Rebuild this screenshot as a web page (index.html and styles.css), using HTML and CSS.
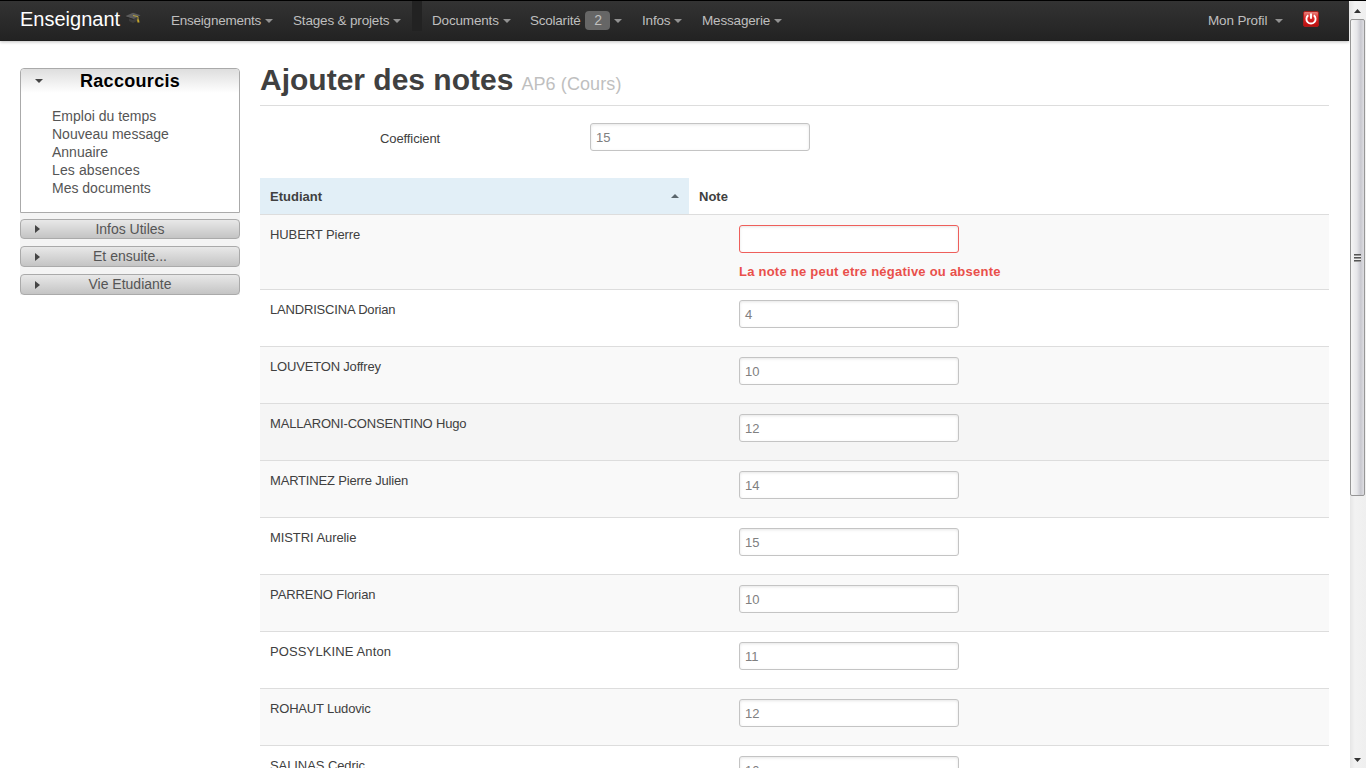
FILE: index.html
```html
<!DOCTYPE html>
<html lang="fr">
<head>
<meta charset="utf-8">
<title>Ajouter des notes</title>
<link rel="stylesheet" href="styles.css">
</head>
<body>
<div class="window">
  <div class="page">
    <header class="navbar">
      <a class="brand"><span class="brand-name">Enseignant</span>
        <svg class="cap" width="16" height="12" viewBox="0 0 16 12"><path d="M4 5v4l4 2 4-2V5z" fill="#3c3c3c"/><path d="M0 4.200 8 .7l7.500 2.600L8.500 7z" fill="#5c5c5c"/><path d="M0 4.200 8.500 7v1L0 5z" fill="#252525"/><path d="M8 3.500l5 1.200v3.300" fill="none" stroke="#b6a23e"/><path d="M12 7.500h2l.5 3h-2z" fill="#c3a52d"/></svg>
      </a>
      <nav class="menu">
        <a class="item enseignements"><span>Enseignements</span><i class="caret"></i></a>
        <a class="item stages"><span>Stages &amp; projets</span><i class="caret"></i></a>
        <div class="divider"></div>
        <a class="item documents"><span>Documents</span><i class="caret"></i></a>
        <a class="item scolarite"><span>Scolarité</span><b class="badge">2</b><i class="caret"></i></a>
        <a class="item infos"><span>Infos</span><i class="caret"></i></a>
        <a class="item messagerie"><span>Messagerie</span><i class="caret"></i></a>
      </nav>
      <div class="account">
        <a class="item profil"><span>Mon Profil</span><i class="caret"></i></a>
        <svg class="power" width="16" height="16" viewBox="0 0 16 16"><defs><linearGradient id="red" x1="0" y1="0" x2="0" y2="1"><stop offset="0" stop-color="#e88982"/><stop offset=".45" stop-color="#d82626"/><stop offset="1" stop-color="#b90d0d"/></linearGradient></defs><rect x=".5" y=".5" width="15" height="15" rx="1.500" fill="url(#red)" stroke="#a51d1b"/><path d="M5.200 4.300a4.600 4.600 0 1 0 5.600 0M8 2.500v5.300" fill="none" stroke="#fff" stroke-width="1.900"/></svg>
      </div>
    </header>
    <div class="columns">
      <aside class="sidebar">
        <section class="panel">
          <h3 class="panel-title"><svg class="arrow" width="8" height="4"><path d="M0 0h8L4 4z" fill="#454545"/></svg><span>Raccourcis</span></h3>
          <ul class="links"><li>Emploi du temps</li><li>Nouveau message</li><li>Annuaire</li><li class="absences">Les absences</li><li>Mes documents</li></ul>
        </section>
        <div class="closed utiles"><svg class="side-arrow" width="5" height="8"><path d="M0 0v8l5-4z" fill="#454545"/></svg><span>Infos Utiles</span></div>
        <div class="closed ensuite"><svg class="side-arrow" width="5" height="8"><path d="M0 0v8l5-4z" fill="#454545"/></svg><span>Et ensuite...</span></div>
        <div class="closed vie"><svg class="side-arrow" width="5" height="8"><path d="M0 0v8l5-4z" fill="#454545"/></svg><span>Vie Etudiante</span></div>
      </aside>
      <main class="content">
        <h1 class="title"><span>Ajouter des notes</span><small>AP6 (Cours)</small></h1>
        <div class="coef"><label>Coefficient</label><div class="field">15</div></div>
        <div class="grid">
          <div class="head"><div class="sorted"><span>Etudiant</span><svg width="8" height="4"><path d="M0 4h8L4 0z" fill="#5b666d"/></svg></div><div class="note-head">Note</div></div>
          <div class="row odd invalid"><span class="name plain">HUBERT Pierre</span><div><div class="field"></div><p class="error">La note ne peut etre négative ou absente</p></div></div>
          <div class="row"><span class="name">LANDRISCINA Dorian</span><div class="field">4</div></div>
          <div class="row odd"><span class="name">LOUVETON Joffrey</span><div class="field">10</div></div>
          <div class="row hover"><span class="name">MALLARONI-CONSENTINO Hugo</span><div class="field">12</div></div>
          <div class="row odd"><span class="name">MARTINEZ Pierre Julien</span><div class="field">14</div></div>
          <div class="row"><span class="name plain">MISTRI Aurelie</span><div class="field">15</div></div>
          <div class="row odd"><span class="name plain">PARRENO Florian</span><div class="field">10</div></div>
          <div class="row"><span class="name wide">POSSYLKINE Anton</span><div class="field">11</div></div>
          <div class="row odd"><span class="name">ROHAUT Ludovic</span><div class="field">12</div></div>
          <div class="row"><span class="name plain">SALINAS Cedric</span><div class="field">10</div></div>
        </div>
      </main>
    </div>
  </div>
  <div class="scrollbar">
    <svg class="up" width="7" height="4"><path d="M0 4h7L3.500 0z" fill="#333"/></svg>
    <div class="thumb"><div class="grip"></div></div>
    <svg class="down" width="7" height="4"><path d="M0 0h7L3.500 4z" fill="#333"/></svg>
  </div>
</div>
</body>
</html>
```
FILE: styles.css
```css
* { box-sizing: border-box; }
body { margin: 0; height: 768px; overflow: hidden; background: #fff; color: #404040; font: 13px/18px "Liberation Sans", Arial, sans-serif; }
.window { display: flex; height: 768px; border-top: 1px solid #000; overflow: hidden; }
.page { width: 1349px; flex: none; }
.navbar { display: flex; height: 40px; padding-left: 20px; color: #bfbfbf; background: linear-gradient(#333, #222); box-shadow: 0 1px 3px rgba(0,0,0,.25), inset 0 -1px 0 rgba(0,0,0,.1); }
.brand { display: flex; width: 151px; color: #fff; font-size: 20px; line-height: 36px; }
.brand-name { width: 105px; white-space: nowrap; }
.cap { margin-top: 11px; }
.menu { display: flex; flex: 1; }
.item { display: flex; align-items: center; height: 38px; white-space: nowrap; font-size: 13.5px; letter-spacing: -.23px; }
.item span { padding-top: 1px; }
.caret { margin-left: 4px; margin-top: 2px; border: 4px solid transparent; border-top-color: #929292; border-bottom: 0; }
.enseignements { width: 122px; }
.stages { width: 119px; }
.divider { width: 10px; height: 30px; margin-right: 10px; background: #222; }
.documents { width: 98px; }
.scolarite { width: 112px; }
.infos { width: 60px; }
.badge { width: 25px; height: 19px; margin-left: 5px; border-radius: 4px; background: #666; font-size: 14px; font-weight: 400; line-height: 19px; text-align: center; }
.account { display: flex; width: 141px; }
.profil { width: 95px; letter-spacing: -.15px; }
.profil .caret { margin-left: 8px; }
.stages, .documents, .messagerie, .infos { letter-spacing: -.17px; }
.power { margin-top: 10px; }
.columns { display: flex; padding: 27px 20px 0; }
.sidebar { width: 220px; height: 227px; margin-right: 20px; background: linear-gradient(#fff 145px, #f4f4f4 145px); color: #555; font-size: 14px; }
.panel { height: 145px; border: 1px solid #aaa; border-radius: 4px 4px 0 0; background: #fff; }
.panel-title { display: flex; align-items: center; height: 24px; margin: 0; padding-left: 14px; border-radius: 4px 4px 0 0; color: #000; background: linear-gradient(#dedede, #fff); font-size: 18px; letter-spacing: .3px; }
.panel-title span { margin-left: 37px; }
.links { margin: 14px 0 0; padding: 0 0 0 31px; list-style: none; line-height: 18px; }
.absences { letter-spacing: .12px; }
.closed { display: flex; align-items: center; height: 21px; margin-top: 7px; padding-left: 14px; border: 1px solid #aaa; border-radius: 4px; background: linear-gradient(#e8e8e8, #c4c4c4); line-height: 18px; }
.utiles { height: 20px; margin-top: 6px; }
.closed span { flex: 1; padding-right: 19px; text-align: center; }
.ensuite span, .vie span { padding-bottom: 2px; }
.content { width: 1069px; }
.title { display: flex; align-items: baseline; height: 38px; margin: 0 0 17px; border-bottom: 1px solid #ddd; font-size: 30px; line-height: 24px; white-space: nowrap; }
.title small { margin-left: 8px; color: #bfbfbf; font-size: 18px; font-weight: 400; letter-spacing: .1px; }
.coef { display: flex; height: 55px; padding-left: 120px; }
.coef label { width: 210px; padding-top: 7px; letter-spacing: -.1px; }
.field { width: 220px; height: 28px; padding: 5px; border: 1px solid #c4c4c4; border-radius: 3px; background: #fff; box-shadow: inset 0 1px 3px rgba(0,0,0,.1); color: #808080; }
.head { display: flex; height: 36px; font-weight: 700; line-height: 38px; }
.sorted { display: flex; align-items: center; justify-content: space-between; width: 429px; padding: 0 10px; background: #e2eff7; }
.sorted span { margin-top: 1px; }
.note-head { padding-left: 10px; }
.row { display: flex; height: 57px; padding: 10px 0 0 10px; border-top: 1px solid #ddd; }
.odd { background: #f9f9f9; }
.hover { background: #f5f5f5; }
.name { width: 469px; padding-top: 1px; letter-spacing: -.18px; }
.plain { letter-spacing: -.08px; }
.wide { letter-spacing: .12px; }
.invalid { height: 75px; }
.invalid .field { border-color: #ee5f5b; }
.error { margin: 10px 0 0; color: #e9504b; font-weight: 700; letter-spacing: .24px; }
.scrollbar { display: flex; flex-direction: column; align-items: flex-start; width: 16px; height: 767px; margin-left: 1px; background: linear-gradient(90deg, #e6e6e6, #f2f2f2 30%, #efefef); }
.up { margin: 8px 0 6px 4px; flex: none; }
.thumb { display: flex; align-items: center; justify-content: center; width: 15px; height: 477px; flex: none; border: 1px solid #969696; border-radius: 2px; background: linear-gradient(90deg, #f5f5f5, #e6e6e9 45%, #c8c8cf 75%, #dedee2); }
.grip { width: 7px; height: 8px; background: repeating-linear-gradient(#555 0 1px, #999 1px 2px, #eee 2px 3px); }
.down { margin: auto 0 6px 4px; flex: none; }
```
